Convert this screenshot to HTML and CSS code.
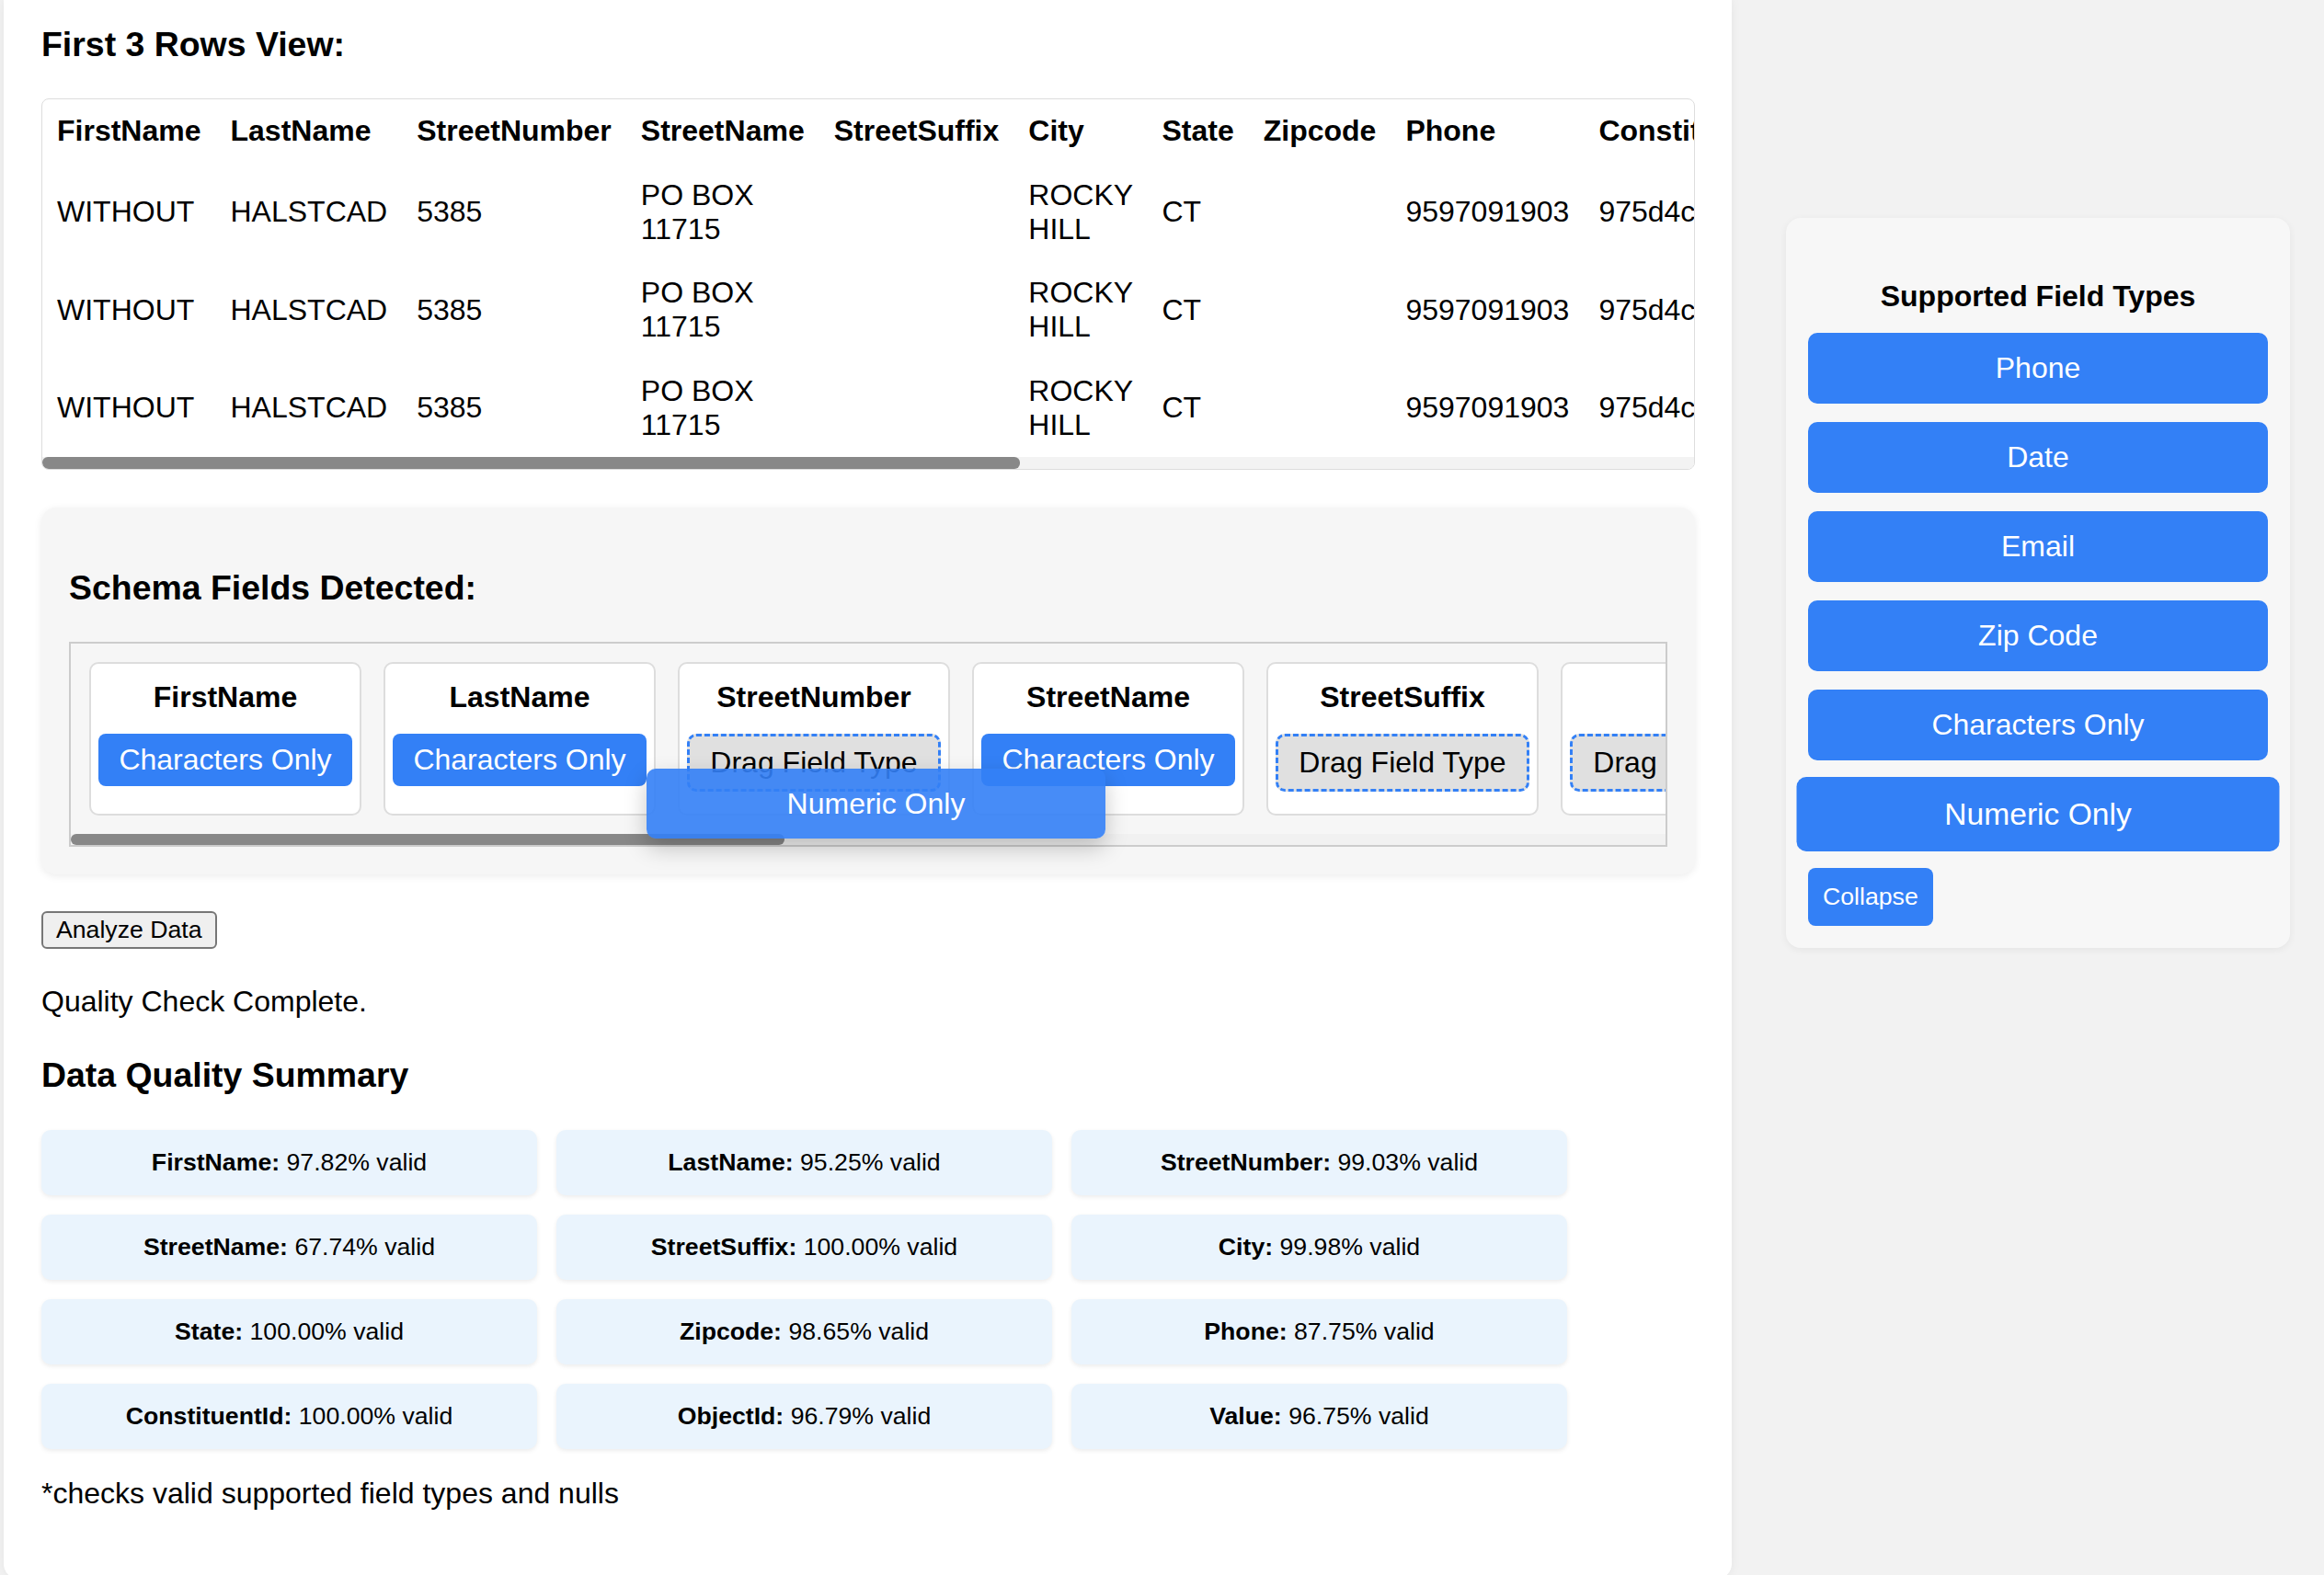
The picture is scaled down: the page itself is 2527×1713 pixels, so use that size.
FILE: index.html
```html
<!DOCTYPE html>
<html lang="en">
<head>
<meta charset="utf-8">
<title>Data Quality Check</title>
<link rel="stylesheet" href="styles.css">
</head>
<body>
<div class="page">
  <main class="main">
    <h3 class="heading heading-first">First 3 Rows View:</h3>
    <div class="table-wrap">
      <div class="table-clip">
        <table class="data-table">
          <thead>
            <tr>
              <th>FirstName</th><th>LastName</th><th>StreetNumber</th><th>StreetName</th><th>StreetSuffix</th><th>City</th><th>State</th><th>Zipcode</th><th>Phone</th><th>ConstituentId</th><th>ObjectId</th><th>Value</th>
            </tr>
          </thead>
          <tbody>
            <tr>
              <td>WITHOUT</td><td>HALSTCAD</td><td>5385</td><td>PO BOX 11715</td><td></td><td>ROCKY HILL</td><td>CT</td><td></td><td>9597091903</td><td>975d4c1e8b2a4f6d9c3e7a1b5f0d2e84</td><td>00293817</td><td>250.00</td>
            </tr>
            <tr>
              <td>WITHOUT</td><td>HALSTCAD</td><td>5385</td><td>PO BOX 11715</td><td></td><td>ROCKY HILL</td><td>CT</td><td></td><td>9597091903</td><td>975d4c1e8b2a4f6d9c3e7a1b5f0d2e84</td><td>00293818</td><td>250.00</td>
            </tr>
            <tr>
              <td>WITHOUT</td><td>HALSTCAD</td><td>5385</td><td>PO BOX 11715</td><td></td><td>ROCKY HILL</td><td>CT</td><td></td><td>9597091903</td><td>975d4c1e8b2a4f6d9c3e7a1b5f0d2e84</td><td>00293819</td><td>250.00</td>
            </tr>
          </tbody>
        </table>
      </div>
      <div class="hscroll hscroll-table"><div class="thumb" style="width:59.2%"></div></div>
    </div>

    <section class="schema">
      <h3 class="heading">Schema Fields Detected:</h3>
      <div class="field-box">
        <div class="field-clip">
          <div class="field-row">
            <div class="field-card"><div class="field-name">FirstName</div><div class="type-chip">Characters Only</div></div>
            <div class="field-card"><div class="field-name">LastName</div><div class="type-chip">Characters Only</div></div>
            <div class="field-card"><div class="field-name">StreetNumber</div><div class="drop-zone">Drag Field Type</div></div>
            <div class="field-card"><div class="field-name">StreetName</div><div class="type-chip">Characters Only</div></div>
            <div class="field-card"><div class="field-name">StreetSuffix</div><div class="drop-zone">Drag Field Type</div></div>
            <div class="field-card"><div class="field-name">City</div><div class="drop-zone">Drag Field Type</div></div>
            <div class="field-card"><div class="field-name">State</div><div class="drop-zone">Drag Field Type</div></div>
            <div class="field-card"><div class="field-name">Zipcode</div><div class="drop-zone">Drag Field Type</div></div>
          </div>
        </div>
        <div class="hscroll"><div class="thumb" style="width:44.75%"></div></div>
        <div class="drag-ghost">Numeric Only</div>
      </div>
    </section>

    <div class="actions"><button class="analyze" type="button">Analyze Data</button></div>
    <p class="status">Quality Check Complete.</p>

    <h3 class="heading summary-title">Data Quality Summary</h3>
    <div class="summary-grid">
      <div class="summary-card"><strong>FirstName:</strong> 97.82% valid</div>
      <div class="summary-card"><strong>LastName:</strong> 95.25% valid</div>
      <div class="summary-card"><strong>StreetNumber:</strong> 99.03% valid</div>
      <div class="summary-card"><strong>StreetName:</strong> 67.74% valid</div>
      <div class="summary-card"><strong>StreetSuffix:</strong> 100.00% valid</div>
      <div class="summary-card"><strong>City:</strong> 99.98% valid</div>
      <div class="summary-card"><strong>State:</strong> 100.00% valid</div>
      <div class="summary-card"><strong>Zipcode:</strong> 98.65% valid</div>
      <div class="summary-card"><strong>Phone:</strong> 87.75% valid</div>
      <div class="summary-card"><strong>ConstituentId:</strong> 100.00% valid</div>
      <div class="summary-card"><strong>ObjectId:</strong> 96.79% valid</div>
      <div class="summary-card"><strong>Value:</strong> 96.75% valid</div>
    </div>
    <p class="note">*checks valid supported field types and nulls</p>
  </main>

  <aside class="sidebar">
    <h4 class="sidebar-title">Supported Field Types</h4>
    <div class="type-btn">Phone</div>
    <div class="type-btn">Date</div>
    <div class="type-btn">Email</div>
    <div class="type-btn">Zip Code</div>
    <div class="type-btn">Characters Only</div>
    <div class="type-btn type-btn-active">Numeric Only</div>
    <button class="collapse-btn" type="button">Collapse</button>
  </aside>
</div>
</body>
</html>
```

FILE: styles.css
```css
* {
  box-sizing: border-box;
}

html,
body {
  margin: 0;
  padding: 0;
}

body {
  background: #f2f2f2;
  font-family: "Liberation Sans", Arial, Helvetica, sans-serif;
  color: #000;
  overflow: hidden;
}

.page {
  display: flex;
  align-items: flex-start;
}

/* ---------- main panel ---------- */
.main {
  flex: 0 0 1879px;
  width: 1879px;
  margin-left: 4px;
  background: #fff;
  border-radius: 0 0 16px 16px;
  padding: 27px 40px 42px 41px;
  box-shadow: 0 0 12px rgba(0, 0, 0, 0.06);
  font-size: 32px;
}

.heading {
  font-size: 37.44px;
  font-weight: bold;
  margin: 37.44px 0;
}

.heading-first {
  margin-top: 0;
}

/* ---------- preview table ---------- */
.table-wrap {
  border: 1px solid #dddddd;
  border-radius: 8px;
  overflow: hidden;
  background: #fff;
}

.table-clip {
  overflow: hidden;
}

.data-table {
  width: 100%;
  border-collapse: collapse;
}

.data-table th,
.data-table td {
  padding: 16px 16px 16.5px;
  text-align: left;
  font-size: 32px;
  vertical-align: middle;
}

.data-table th {
  font-weight: bold;
}

.hscroll {
  height: 12px;
  background: #f3f3f3;
}

.hscroll-table {
  height: 13px;
}

.thumb {
  height: 100%;
  background: #888888;
  border-radius: 6px;
}

/* ---------- schema section ---------- */
.schema {
  margin-top: 41px;
  background: #f6f6f6;
  border-radius: 16px;
  padding: 28px 30px 30px;
  box-shadow: 0 2px 8px rgba(0, 0, 0, 0.08);
}

.field-box {
  position: relative;
  border: 2px solid #cccccc;
}

.field-box .hscroll {
  background: #f1f1f1;
}

.field-clip {
  overflow: hidden;
}

.field-row {
  display: flex;
  gap: 24px;
  padding: 20px;
}

.field-card {
  flex: 0 0 296px;
  width: 296px;
  background: #fff;
  border: 2px solid #dddddd;
  border-radius: 10px;
  padding: 18px 8px 24px;
  display: flex;
  flex-direction: column;
  align-items: center;
}

.field-name {
  font-weight: bold;
  margin-bottom: 21px;
}

.type-chip {
  background: #3380f6;
  color: #fff;
  border-radius: 8px;
  padding: 10px 22px;
}

.drop-zone {
  align-self: stretch;
  border: 3px dashed #3380f6;
  background: #e0e0e0;
  border-radius: 10px;
  padding: 10px 0;
  text-align: center;
  white-space: nowrap;
}

.drag-ghost {
  position: absolute;
  left: 626px;
  top: 136px;
  width: 499px;
  height: 76px;
  display: flex;
  align-items: center;
  justify-content: center;
  background: rgba(51, 128, 246, 0.9);
  color: #fff;
  border-radius: 10px;
  box-shadow: 0 10px 24px rgba(0, 0, 0, 0.22);
}

/* ---------- actions & summary ---------- */
.actions {
  margin-top: 40px;
}

.analyze {
  font-family: "Liberation Sans", Arial, Helvetica, sans-serif;
  font-size: 26.67px;
  color: #000;
  background: #efefef;
  border: 2px solid #767676;
  border-radius: 6px;
  padding: 3px 14px;
}

.status {
  margin: 39px 0 0;
}

.summary-title {
  margin: 39.5px 0 38px;
}

.summary-grid {
  display: grid;
  grid-template-columns: repeat(3, 539px);
  gap: 21px;
}

.summary-card {
  background: #eaf4fd;
  border-radius: 10px;
  padding: 20px 10px;
  text-align: center;
  font-size: 26.67px;
  box-shadow: 0 2px 5px rgba(0, 0, 0, 0.08);
}

.note {
  margin: 30px 0 32px;
}

/* ---------- sidebar ---------- */
.sidebar {
  flex: 0 0 548px;
  width: 548px;
  margin: 237px 0 0 59px;
  background: #f7f7f7;
  border-radius: 16px;
  padding: 24px;
  box-shadow: 0 2px 8px rgba(0, 0, 0, 0.06);
}

.sidebar-title {
  font-size: 32px;
  font-weight: bold;
  text-align: center;
  margin: 42.6px 0 21px;
}

.type-btn {
  background: #3380f6;
  color: #fff;
  border-radius: 10px;
  padding: 20px;
  margin-bottom: 20px;
  text-align: center;
  font-size: 32px;
}

.type-btn-active {
  transform: scale(1.05);
}

.collapse-btn {
  font-family: "Liberation Sans", Arial, Helvetica, sans-serif;
  font-size: 26.67px;
  color: #fff;
  background: #3380f6;
  border: 0;
  border-radius: 8px;
  padding: 16px;
  display: block;
}
```
